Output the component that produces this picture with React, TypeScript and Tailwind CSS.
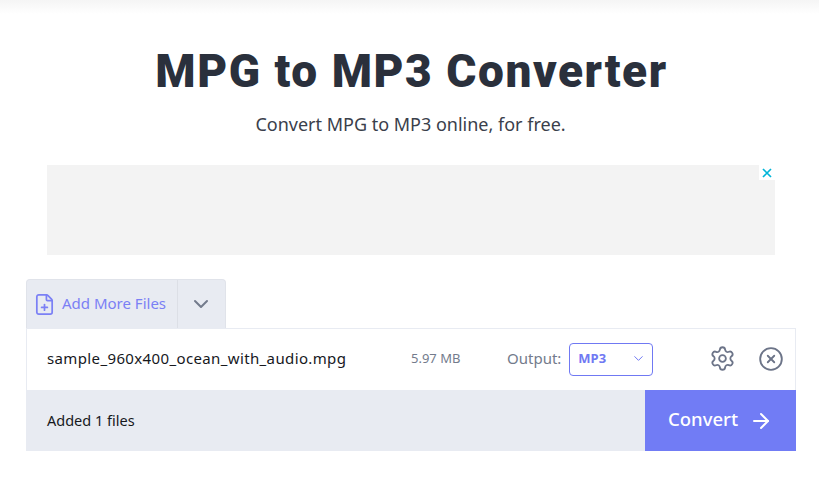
import { ChevronDown, FilePlus, Settings, CircleX, ArrowRight } from "lucide-react";

export default function App() {
  return (
    <div className="relative h-[482px] w-[819px] overflow-hidden bg-white font-['Noto_Sans',sans-serif]">
      <div className="h-[14px] bg-gradient-to-b from-[#f5f5f5] to-white" />
      <div className="flex flex-col items-center">
        <h1 className="mt-[30px] ml-[4px] h-[54px] font-['Roboto',sans-serif] text-[46px] leading-[54px] font-black tracking-[1.55px] text-[#2a303c]">MPG to MP3 Converter</h1>
        <p className="mt-[14px] ml-[2px] h-[24px] text-[18px] leading-[24px] text-[#3a404b]">Convert MPG to MP3 online, for free.</p>
      </div>
      <div className="relative mx-[47px] mt-[29px] h-[90px] w-[728px] bg-[#f3f3f3]">
        <div className="absolute top-0 right-0 flex h-[15px] w-[16px] items-center justify-center bg-white text-[#00b5d8]">
          <svg width="10" height="10" viewBox="0 0 10 10"><path d="M1 1L9 9M9 1L1 9" stroke="currentColor" strokeWidth="1.7" /></svg>
        </div>
      </div>
      <div className="ml-[26px] mt-[24px] w-[770px]">
        <div className="flex h-[49px] w-[200px] rounded-t-[4px] border border-b-0 border-[#e0e3ea] bg-[#e8ebf2]">
          <div className="flex w-[151px] items-center border-r border-[#dcdfe6] pl-[6px] text-[#7b80f5]">
            <FilePlus size={23} strokeWidth={1.8} />
            <span className="mb-[2px] ml-[6px] text-[15px]">Add More Files</span>
          </div>
          <div className="flex flex-1 items-center justify-center pr-[2px] text-[#737b8c]">
            <ChevronDown size={24} strokeWidth={2} />
          </div>
        </div>
        <div className="flex h-[62px] items-center border border-b-0 border-[#e8ebf2] bg-white pb-[2px] pl-[20px]">
          <span className="w-[364px] text-[15px] tracking-[0.37px] text-[#16181d]">sample_960x400_ocean_with_audio.mpg</span>
          <span className="w-[96px] text-[13px] text-[#737b8c]">5.97 MB</span>
          <span className="text-[15px] text-[#737b8c]">Output:</span>
          <div className="mt-[2px] ml-[8px] flex h-[33px] w-[84px] items-center justify-between rounded-[4px] border border-[#7079f3] pb-[2px] pl-[8px] pr-[6px] text-[#7079f3]">
            <span className="text-[13px] font-bold">MP3</span>
            <ChevronDown size={15} strokeWidth={1.6} />
          </div>
          <div className="ml-[56px] text-[#6c7488]"><Settings size={27} strokeWidth={1.6} /></div>
          <div className="ml-[22px] text-[#6c7488]"><CircleX size={26} strokeWidth={1.7} /></div>
        </div>
        <div className="flex h-[61px] items-center justify-between bg-[#e8ebf2] pl-[21px]">
          <span className="text-[14.5px] text-[#16181d]">Added 1 files</span>
          <div className="flex h-full w-[151px] items-center justify-center gap-[11px] bg-[#717cf5] text-white">
            <span className="mb-[3px] text-[18.5px] font-medium">Convert</span>
            <ArrowRight size={24} strokeWidth={2} />
          </div>
        </div>
      </div>
    </div>
  );
}
